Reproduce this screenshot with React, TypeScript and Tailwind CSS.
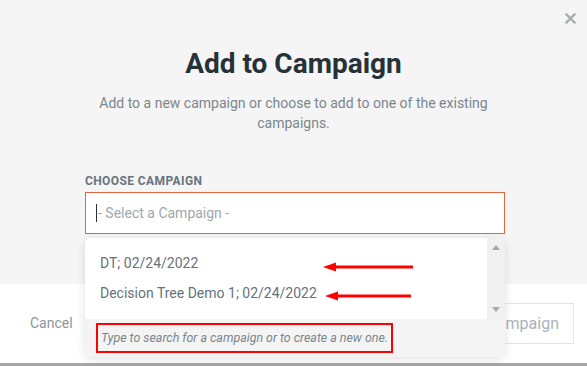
export default function App() {
  return (
    <div className="relative flex h-[366px] w-[587px] flex-col overflow-hidden bg-white" style={{ fontFamily: "Roboto, 'Liberation Sans', sans-serif" }}>
      {/* ── Modal body ── */}
      <div className="relative flex h-[284px] flex-col items-center bg-[#f5f5f5] pt-[46px]">
        <button className="absolute right-[11px] top-[13px] text-[#a3adb2]">
          <svg width="11" height="11" viewBox="0 0 11 11" fill="none" stroke="currentColor" strokeWidth="2.4" strokeLinecap="square">
            <path d="M1.5 1.5l8 8M9.5 1.5l-8 8" />
          </svg>
        </button>
        <h1 className="text-[28px] font-bold leading-[36px] text-[#263238]">Add to Campaign</h1>
        <p className="mt-[11px] max-w-[400px] text-center text-[14px] leading-[20px] text-[#7b868c]">
          Add to a new campaign or choose to add to one of the existing campaigns.
        </p>

        <div className="ml-[3px] mt-[41px] w-[420px]">
          <label className="block text-[12px] font-bold uppercase leading-[14px] tracking-[0.4px] text-[#67747c]">Choose Campaign</label>
          <div className="mt-[4px] flex h-[42px] items-center border border-[#e8643c] bg-white px-[10px]">
            <span className="mr-[1px] h-[18px] w-[1px] bg-[#263238]" />
            <span className="text-[14px] text-[#9ea8ae]">- Select a Campaign -</span>
          </div>
        </div>
      </div>

      {/* ── Footer ── */}
      <div className="flex h-[79px] items-center justify-between bg-white pl-[30px] pr-[13px]">
        <span className="text-[14px] text-[#8a969c]">Cancel</span>
        <button className="flex h-[41px] items-center border border-[#e2e4e5] px-[14px] text-[16px] text-[#a8b4bb]">Add to Campaign</button>
      </div>
      <div className="h-[3px] bg-[#a6a6a6]" />

      {/* ── Dropdown menu ── */}
      <div className="absolute left-[85px] top-[238px] w-[420px] overflow-hidden rounded-[6px] bg-[#f4f4f4] shadow-[0_2px_10px_rgba(0,0,0,0.12)]">
        <div className="flex h-[81px]">
          <div className="flex flex-1 flex-col bg-white pl-[15px] pt-[16px] text-[14px] text-[#66727a]">
            <div className="leading-[18px]">DT; 02/24/2022</div>
            <div className="mt-[12px] leading-[18px]">Decision Tree Demo 1; 02/24/2022</div>
          </div>
          <div className="flex w-[18px] flex-col items-center justify-between bg-[#f0f0f0] py-[7px]">
            <svg width="8" height="5" viewBox="0 0 8 5"><path d="M0 5L4 0L8 5Z" fill="#a9a9a9" /></svg>
            <svg width="8" height="5" viewBox="0 0 8 5"><path d="M0 0L8 0L4 5Z" fill="#a9a9a9" /></svg>
          </div>
        </div>
        <div className="px-[11px] pb-[4px] pt-[4px]">
          <div className="inline-flex h-[30px] items-center border-2 border-[#ff0000] px-[3px] text-[12.4px] italic text-[#7a858c]">
            Type to search for a campaign or to create a new one.
          </div>
        </div>
      </div>

      {/* ── Annotation arrows ── */}
      <svg className="absolute left-[320px] top-[258px]" width="100" height="46" viewBox="0 0 100 46">
        <path d="M14 9H93" stroke="#ff0000" strokeWidth="3" />
        <path d="M3 9L16 4.5V13.5Z" fill="#ff0000" />
        <path d="M16 38H91" stroke="#ff0000" strokeWidth="3" />
        <path d="M5 38L18 33.5V42.5Z" fill="#ff0000" />
      </svg>
    </div>
  );
}
